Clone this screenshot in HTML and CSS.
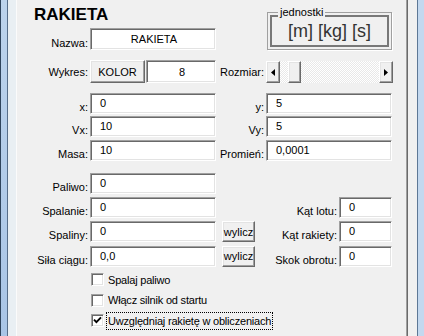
FILE: index.html
```html
<!DOCTYPE html>
<html lang="pl">
<head>
<meta charset="utf-8">
<title>RAKIETA</title>
<link rel="stylesheet" href="styles.css">
</head>
<body>
<div class="window">
  <div class="edge-l"></div>
  <div class="gutter"></div>
  <div class="panel">
    <div class="top">
      <div class="top-left">
        <h1 class="title">RAKIETA</h1>
        <div class="row row-name">
          <span class="lbl lbl-l">Nazwa:</span>
          <div class="field field-wide center">RAKIETA</div>
        </div>
      </div>
      <div class="group">
        <span class="legend">jednostki</span>
        <div class="units">[m] [kg] [s]</div>
      </div>
    </div>

    <div class="row row-plot">
      <span class="lbl lbl-l lift">Wykres:</span>
      <div class="btn btn-color">KOLOR</div>
      <div class="field field-num center">8</div>
      <span class="lbl lbl-r lift">Rozmiar:</span>
      <div class="scroll">
        <div class="btn arrow"><svg width="4" height="7" viewBox="0 0 4 7"><path d="M4 0V7L0 3.5Z"/></svg></div>
        <div class="track"><div class="btn thumb"></div></div>
        <div class="btn arrow"><svg width="4" height="7" viewBox="0 0 4 7"><path d="M0 0V7L4 3.5Z"/></svg></div>
      </div>
    </div>

    <div class="block block-xy">
      <div class="row row-std">
        <span class="lbl lbl-l">x:</span>
        <div class="field field-wide">0</div>
        <span class="lbl lbl-r">y:</span>
        <div class="field field-wide">5</div>
      </div>
      <div class="row row-std">
        <span class="lbl lbl-l">Vx:</span>
        <div class="field field-wide">10</div>
        <span class="lbl lbl-r">Vy:</span>
        <div class="field field-wide">5</div>
      </div>
      <div class="row row-std">
        <span class="lbl lbl-l">Masa:</span>
        <div class="field field-wide">10</div>
        <span class="lbl lbl-r">Promień:</span>
        <div class="field field-wide">0,0001</div>
      </div>
    </div>

    <div class="block block-fuel">
      <div class="row row-std">
        <span class="lbl lbl-l">Paliwo:</span>
        <div class="field field-wide">0</div>
      </div>
      <div class="row row-std">
        <span class="lbl lbl-l">Spalanie:</span>
        <div class="field field-wide">0</div>
        <div class="calc-slot"></div>
        <span class="lbl lbl-k">Kąt lotu:</span>
        <div class="field field-k">0</div>
      </div>
      <div class="row row-std">
        <span class="lbl lbl-l">Spaliny:</span>
        <div class="field field-wide">0</div>
        <div class="btn calc-slot">wylicz</div>
        <span class="lbl lbl-k">Kąt rakiety:</span>
        <div class="field field-k">0</div>
      </div>
      <div class="row row-std">
        <span class="lbl lbl-l">Siła ciągu:</span>
        <div class="field field-wide">0,0</div>
        <div class="btn calc-slot">wylicz</div>
        <span class="lbl lbl-k">Skok obrotu:</span>
        <div class="field field-k">0</div>
      </div>
    </div>

    <div class="checks">
      <div class="check-row">
        <span class="box"></span>
        <span class="check-lbl">Spalaj paliwo</span>
      </div>
      <div class="check-row">
        <span class="box"></span>
        <span class="check-lbl">Włącz silnik od startu</span>
      </div>
      <div class="check-row">
        <span class="box"><svg width="9" height="9" viewBox="0 0 9 9"><path d="M1 3.6L3.4 6.2L8 1.4" fill="none" stroke="#000" stroke-width="1.9"/></svg></span>
        <span class="check-lbl focus">Uwzględniaj rakietę w obliczeniach</span>
      </div>
    </div>
  </div>
  <div class="sep"></div>
  <div class="gap-r"></div>
  <div class="edge-r"></div>
</div>
</body>
</html>
```

FILE: styles.css
```css
* { box-sizing: border-box; }

html, body {
  margin: 0;
  padding: 0;
}

body {
  width: 424px;
  height: 336px;
  overflow: hidden;
  background: #f0f0f0;
  font-family: "Liberation Sans", Arial, sans-serif;
  font-size: 11px;
  color: #000;
}

.window {
  display: flex;
  height: 336px;
}

/* window chrome */
.edge-l {
  flex: none;
  width: 8px;
  background: linear-gradient(#bcd3ec, #a9c5e6);
  border-left: 1px solid #2f445c;
  border-right: 1px solid #566d89;
}

.gutter {
  flex: none;
  width: 9px;
  background: #e9eff3;
  border-right: 1px solid #fbfbfb;
}

.sep {
  flex: none;
  width: 2px;
  border-left: 1px solid #a0a0a0;
  border-right: 1px solid #6a6a6a;
}

.gap-r {
  flex: none;
  width: 9px;
  background: #f0f0f0;
}

.edge-r {
  flex: none;
  width: 7px;
  background: #c3d8ef;
  border-left: 1px solid #5d7795;
}

.panel {
  flex: 1;
  min-width: 0;
  background: #f0f0f0;
}

/* top area */
.top {
  display: flex;
  align-items: flex-start;
}

.top-left {
  flex: none;
  width: 250px;
}

.title {
  margin: 0;
  height: 25px;
  padding: 5px 0 0 17px;
  font-size: 17px;
  line-height: 20px;
  font-weight: bold;
}

.group {
  position: relative;
  flex: none;
  width: 125px;
  height: 38px;
  margin-top: 12px;
  padding: 2px;
  border: 1px solid #a0a0a0;
  box-shadow: 1px 1px 0 #fff;
}

.legend {
  position: absolute;
  top: -7px;
  left: 10px;
  padding: 0 2px;
  background: #f0f0f0;
  line-height: 12px;
}

.units {
  height: 32px;
  border: 2px solid #787878;
  text-align: center;
  font-size: 18px;
  line-height: 28px;
  color: #333;
}

/* rows */
.row {
  display: flex;
  align-items: stretch;
}

.row-name {
  height: 22px;
  margin-top: 3px;
}

.row-plot {
  height: 23px;
  margin-top: 10px;
}

.row-std {
  height: 21px;
}

.block {
  display: flex;
  flex-direction: column;
}

.block-xy {
  margin-top: 10px;
  gap: 2.35px;
}

.block-fuel {
  margin-top: 12.3px;
  gap: 3.25px;
}

.lbl {
  flex: none;
  align-self: flex-end;
  line-height: 13px;
  text-align: right;
  white-space: nowrap;
}

.lbl.lift {
  padding-bottom: 4px;
}

.lbl-l {
  width: 71px;
  margin-right: 2px;
}

.lbl-r {
  width: 48px;
  margin-right: 2px;
}

.lbl-k {
  width: 82px;
  margin-right: 2px;
}

/* sunken edit field */
.field {
  flex: none;
  display: flex;
  align-items: center;
  padding: 0 0 1px 9px;
  background: #fff;
  border: 1px solid;
  border-color: #a0a0a0 #fff #fff #a0a0a0;
  box-shadow: inset 1px 1px 0 #696969, inset -1px -1px 0 #e3e3e3;
  white-space: nowrap;
}

.field.center {
  justify-content: center;
  padding: 0 0 0 2px;
}

.field-wide { width: 126px; }
.field-num { width: 70px; padding-left: 4px; }
.field-k { width: 53px; }

/* raised button */
.btn {
  flex: none;
  display: flex;
  align-items: center;
  justify-content: center;
  background: #f0f0f0;
  border: 1px solid;
  border-color: #fff #696969 #696969 #fff;
  box-shadow: inset -1px -1px 0 #a0a0a0, inset 1px 1px 0 #e3e3e3;
  white-space: nowrap;
}

.btn-color {
  width: 55px;
  margin-right: 1px;
}

.calc-slot {
  flex: none;
  width: 33px;
  margin-left: 6px;
}

div.calc-slot:not(.btn) {
  visibility: hidden;
}

/* scrollbar */
.scroll {
  flex: none;
  display: flex;
  width: 127px;
  margin-top: 1px;
}

.arrow {
  width: 14px;
}

.arrow svg path {
  fill: #000;
}

.track {
  flex: 1;
  display: flex;
  padding-left: 8px;
  background: repeating-conic-gradient(#ffffff 0 25%, #e8e8e8 0 50%) 0 0 / 2px 2px;
}

.thumb {
  width: 13px;
}

/* checkboxes */
.checks {
  margin: 3px 0 0 74px;
}

.check-row {
  display: flex;
  align-items: center;
  height: 20.5px;
}

.box {
  flex: none;
  display: flex;
  align-items: center;
  justify-content: center;
  width: 13px;
  height: 13px;
  background: #fff;
  border: 1px solid;
  border-color: #a0a0a0 #fff #fff #a0a0a0;
  box-shadow: inset 1px 1px 0 #696969, inset -1px -1px 0 #e3e3e3;
}

.check-lbl {
  margin-left: 2px;
  padding: 1px 1px;
  line-height: 14px;
  letter-spacing: -0.2px;
  border: 1px dotted transparent;
  white-space: nowrap;
}

.check-lbl.focus {
  border-color: #000;
}
```
